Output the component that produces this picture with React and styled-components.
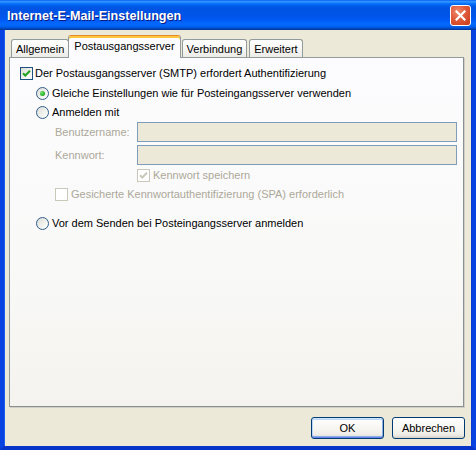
import React from "react";
import styled, { createGlobalStyle } from "styled-components";

const Global = createGlobalStyle`
  html, body { margin: 0; padding: 0; background: #ffffff; }
  body { font-family: "Liberation Sans", Arial, sans-serif; font-size: 11px; color: #000; }
  * { box-sizing: border-box; }
`;

const Window = styled.div`
  width: 476px;
  height: 450px;
  display: flex;
  flex-direction: column;
  overflow: hidden;
`;

const TitleBar = styled.div`
  height: 30px;
  flex: 0 0 30px;
  display: flex;
  align-items: center;
  justify-content: space-between;
  padding: 1px 5px 0 7px;
  background: linear-gradient(
    to bottom,
    #0058ee 0%,
    #3593ff 4%,
    #288eff 7%,
    #127dff 10%,
    #036ffc 13%,
    #0262ee 17%,
    #0057e5 23%,
    #0054e3 30%,
    #0055eb 56%,
    #005bf5 68%,
    #026afe 80%,
    #0062ef 88%,
    #0052d6 93%,
    #0040ab 97%,
    #003092 100%
  );
`;

const Title = styled.span`
  font-family: "Liberation Sans", Arial, sans-serif;
  font-weight: bold;
  font-size: 12.6px;
  color: #ffffff;
  text-shadow: 1px 1px 0 #0a1883;
`;

const CloseButton = styled.div`
  width: 21px;
  height: 21px;
  margin-top: -1px;
  border: 1px solid #ffffff;
  border-radius: 3px;
  background: radial-gradient(circle at 35% 30%, #f08a6e 0%, #e0593a 45%, #c43c16 100%);
  display: flex;
  align-items: center;
  justify-content: center;
`;

const Body = styled.div`
  flex: 1;
  display: flex;
  flex-direction: column;
  background: #ece9d8;
  border-left: 4px solid #0842e0;
  border-right: 4px solid #0842e0;
  border-bottom: 4px solid #0733c9;
  box-shadow: inset 1px 0 0 #1d5cf0, inset -1px 0 0 #0a3ad0;
  padding: 5px 7px 7px 5px;
`;

const TabRow = styled.div`
  display: flex;
  align-items: flex-end;
  height: 22px;
  margin-left: 2px;
  position: relative;
  z-index: 1;
`;

const Tab = styled.div`
  height: ${(p) => (p.$active ? "23px" : "18px")};
  margin: ${(p) => (p.$active ? "0 -1px -1px -1px" : "0 0 0 2px")};
  padding: ${(p) => (p.$active ? "3px 5px 0" : "2px 4px 0")};
  border: 1px solid #919b9c;
  border-bottom: none;
  border-radius: 3px 3px 0 0;
  border-top-color: ${(p) => (p.$active ? "#e68b2c" : "#919b9c")};
  background: ${(p) =>
    p.$active
      ? "#fcfcfe"
      : "linear-gradient(to bottom, #ffffff 0%, #f7f7f5 50%, #ecebe6 100%)"};
  box-shadow: ${(p) => (p.$active ? "inset 0 2px 0 #ffc83c" : "none")};
  position: relative;
  z-index: ${(p) => (p.$active ? 2 : 1)};
  white-space: nowrap;
  line-height: 14px;
  &:first-child { margin-left: 0; }
`;

const Panel = styled.div`
  flex: 1;
  margin-right: 1px;
  border: 1px solid #919b9c;
  border-right-color: #8a9091;
  border-bottom-color: #8a9091;
  box-shadow: 1px 1px 0 #d0cec4;
  background: linear-gradient(to bottom, #fcfcfe 0%, #f9f9f8 60%, #f4f3ee 100%);
  padding: 9px 6px 0 10px;
  display: flex;
  flex-direction: column;
`;

const Row = styled.div`
  display: flex;
  align-items: center;
  gap: ${(p) => p.$gap ?? 3}px;
  height: 13px;
  margin-left: ${(p) => p.$indent || 0}px;
  margin-top: ${(p) => p.$top || 0}px;
  color: ${(p) => (p.$disabled ? "#aca899" : "#000000")};
  white-space: nowrap;
  line-height: 13px;
`;

const Box = styled.span`
  width: 13px;
  height: 13px;
  flex: 0 0 13px;
  border: 1px solid ${(p) => (p.$disabled ? "#cac8bb" : "#1c5180")};
  background: ${(p) =>
    p.$disabled ? "#ffffff" : "linear-gradient(135deg, #dcdcd7 0%, #f3f3ef 60%, #ffffff 100%)"};
  display: flex;
  align-items: center;
  justify-content: center;
`;

const Radio = styled.span`
  width: 13px;
  height: 13px;
  flex: 0 0 13px;
  border-radius: 50%;
  border: 1px solid #2f5c8c;
  background: linear-gradient(135deg, #dcdcd7 0%, #f3f3ef 60%, #ffffff 100%);
  display: flex;
  align-items: center;
  justify-content: center;
`;

const Dot = styled.span`
  width: 5px;
  height: 5px;
  border-radius: 50%;
  background: radial-gradient(circle at 35% 35%, #7ae27a 0%, #2ab82a 55%, #1a8c1a 100%);
`;

const Fields = styled.div`
  display: grid;
  grid-template-columns: 82px 1fr;
  row-gap: 3px;
  align-items: center;
  margin-left: 35px;
  margin-top: 3px;
`;

const FieldLabel = styled.span`
  color: #aca899;
  line-height: 13px;
`;

const Input = styled.div`
  height: 20px;
  border: 1px solid #7f9db9;
  background: #ece9d8;
`;

const Buttons = styled.div`
  display: flex;
  justify-content: flex-end;
  gap: 8px;
  margin-top: 10px;
`;

const Button = styled.div`
  width: 73px;
  height: 22px;
  border: 1px solid #003c74;
  border-radius: 3px;
  background: linear-gradient(to bottom, #ffffff 0%, #f5f4ef 60%, #ecebe6 85%, #d6d0c5 100%);
  box-shadow: ${(p) =>
    p.$default
      ? "inset 0 1px 0 #cee7ff, inset 0 -1px 0 #6982ee, inset 1px 0 0 #bcd4f6, inset -1px 0 0 #89ade4, inset 0 2px 0 #bcd4f6, inset 0 -2px 0 #89ade4"
      : "none"};
  display: flex;
  align-items: center;
  justify-content: center;
  line-height: 13px;
`;

const Check = ({ color }) => (
  <svg width="9" height="9" viewBox="0 0 9 9">
    <path d="M1 4.2 L3.3 6.5 L8 1.8" fill="none" stroke={color} strokeWidth="2" />
  </svg>
);

const CloseX = () => (
  <svg width="11" height="11" viewBox="0 0 11 11">
    <path d="M1.5 1.5 L9.5 9.5 M9.5 1.5 L1.5 9.5" stroke="#ffffff" strokeWidth="2.2" strokeLinecap="square" />
  </svg>
);

export default function App() {
  return (
    <>
      <Global />
      <Window>
        <TitleBar>
          <Title>Internet-E-Mail-Einstellungen</Title>
          <CloseButton>
            <CloseX />
          </CloseButton>
        </TitleBar>
        <Body>
          <TabRow>
            <Tab>Allgemein</Tab>
            <Tab $active>Postausgangsserver</Tab>
            <Tab>Verbindung</Tab>
            <Tab>Erweitert</Tab>
          </TabRow>
          <Panel>
            <Row $gap={2}>
              <Box>
                <Check color="#21a121" />
              </Box>
              Der Postausgangsserver (SMTP) erfordert Authentifizierung
            </Row>
            <Row $indent={16} $top={7}>
              <Radio>
                <Dot />
              </Radio>
              Gleiche Einstellungen wie für Posteingangsserver verwenden
            </Row>
            <Row $indent={16} $top={6}>
              <Radio />
              Anmelden mit
            </Row>
            <Fields>
              <FieldLabel>Benutzername:</FieldLabel>
              <Input />
              <FieldLabel>Kennwort:</FieldLabel>
              <Input />
            </Fields>
            <Row $indent={117} $top={4} $disabled>
              <Box $disabled>
                <Check color="#cac8bb" />
              </Box>
              Kennwort speichern
            </Row>
            <Row $indent={35} $top={6} $disabled>
              <Box $disabled />
              Gesicherte Kennwortauthentifizierung (SPA) erforderlich
            </Row>
            <Row $indent={16} $top={16}>
              <Radio />
              Vor dem Senden bei Posteingangsserver anmelden
            </Row>
          </Panel>
          <Buttons>
            <Button $default>OK</Button>
            <Button>Abbrechen</Button>
          </Buttons>
        </Body>
      </Window>
    </>
  );
}
